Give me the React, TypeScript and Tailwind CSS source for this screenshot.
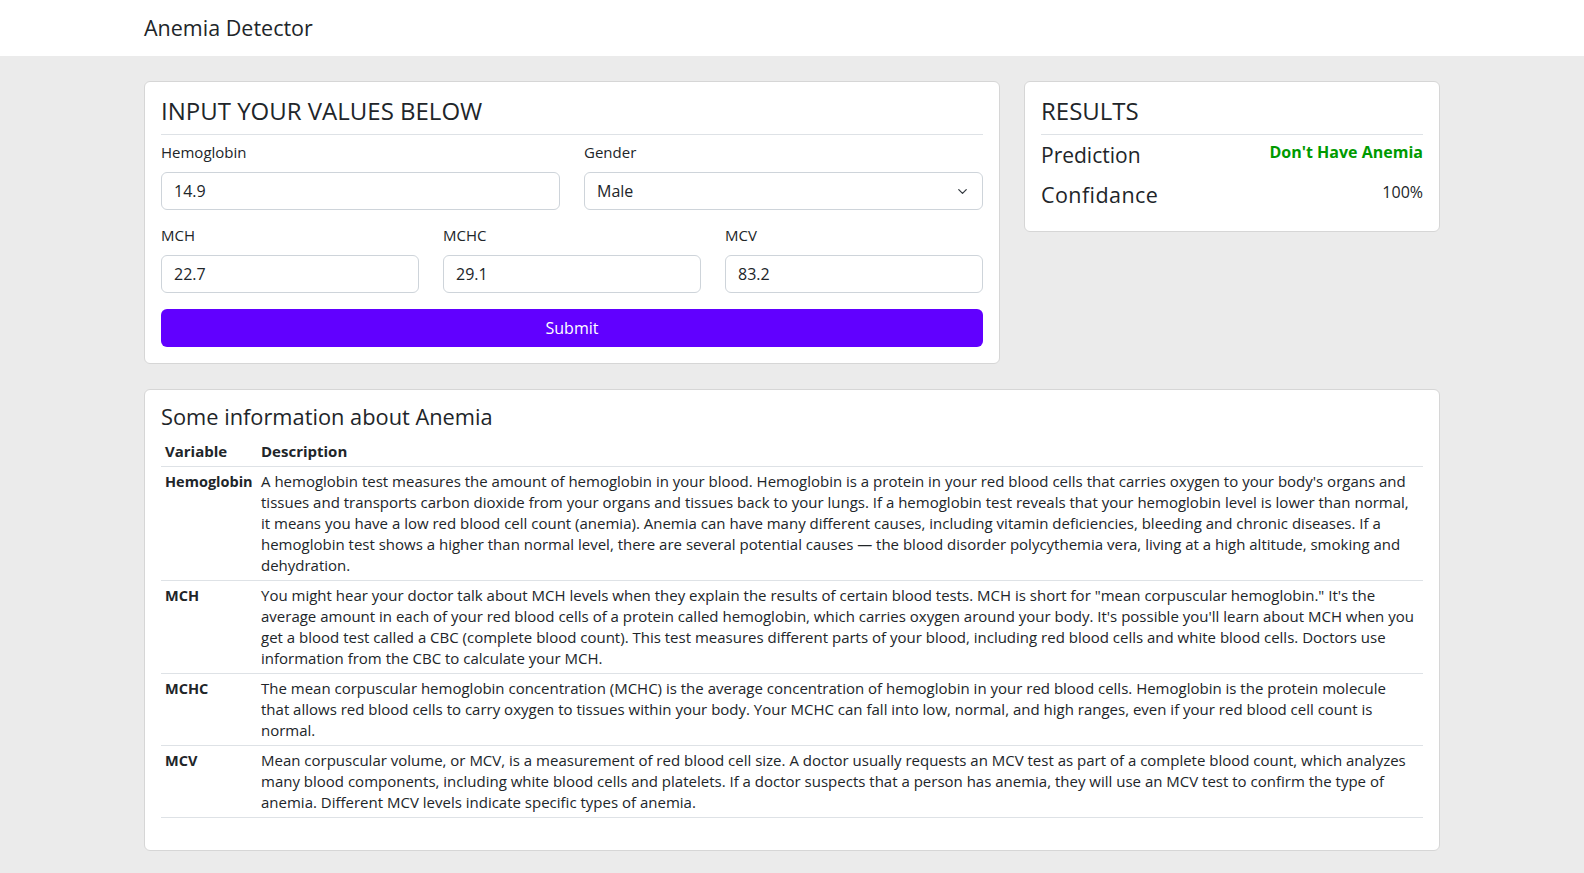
import { ChevronDown } from 'lucide-react';

const FONT = "font-['Open_Sans',sans-serif]";

const rows: { name: string; lines: string[] }[] = [
    {
        name: 'Hemoglobin',
        lines: [
            "A hemoglobin test measures the amount of hemoglobin in your blood. Hemoglobin is a protein in your red blood cells that carries oxygen to your body's organs and",
            'tissues and transports carbon dioxide from your organs and tissues back to your lungs. If a hemoglobin test reveals that your hemoglobin level is lower than normal,',
            'it means you have a low red blood cell count (anemia). Anemia can have many different causes, including vitamin deficiencies, bleeding and chronic diseases. If a',
            'hemoglobin test shows a higher than normal level, there are several potential causes — the blood disorder polycythemia vera, living at a high altitude, smoking and',
            'dehydration.',
        ],
    },
    {
        name: 'MCH',
        lines: [
            'You might hear your doctor talk about MCH levels when they explain the results of certain blood tests. MCH is short for "mean corpuscular hemoglobin." It\'s the',
            "average amount in each of your red blood cells of a protein called hemoglobin, which carries oxygen around your body. It's possible you'll learn about MCH when you",
            'get a blood test called a CBC (complete blood count). This test measures different parts of your blood, including red blood cells and white blood cells. Doctors use',
            'information from the CBC to calculate your MCH.',
        ],
    },
    {
        name: 'MCHC',
        lines: [
            'The mean corpuscular hemoglobin concentration (MCHC) is the average concentration of hemoglobin in your red blood cells. Hemoglobin is the protein molecule',
            'that allows red blood cells to carry oxygen to tissues within your body. Your MCHC can fall into low, normal, and high ranges, even if your red blood cell count is',
            'normal.',
        ],
    },
    {
        name: 'MCV',
        lines: [
            'Mean corpuscular volume, or MCV, is a measurement of red blood cell size. A doctor usually requests an MCV test as part of a complete blood count, which analyzes',
            'many blood components, including white blood cells and platelets. If a doctor suspects that a person has anemia, they will use an MCV test to confirm the type of',
            'anemia. Different MCV levels indicate specific types of anemia.',
        ],
    },
];

// Small labelled text field
function Field({ label, value, className = '' }: { label: string; value: string; className?: string }) {
    return (
        <div className={className}>
            <label className="block text-[15px] leading-[21px] mb-[9px]">{label}</label>
            <div className="h-[38px] border border-[#ced4da] rounded-md bg-white px-3 flex items-center text-[16px]">
                {value}
            </div>
        </div>
    );
}

export default function App() {
    return (
        <div className={`min-h-[873px] bg-[#ebebeb] text-[#212529] ${FONT}`}>
            <header className="bg-white h-[56px] flex items-center">
                <div className="w-[1296px] mx-auto text-[21.5px] leading-none">Anemia Detector</div>
            </header>

            <main className="w-[1296px] mx-auto pt-[25px]">
                <div className="flex gap-6 items-start">
                    {/* inputs */}
                    <section className="w-[856px] bg-white border border-[#d6d6d6] rounded-md p-4">
                        <h2 className="text-[24px] leading-[26px] font-medium">INPUT YOUR VALUES BELOW</h2>
                        <hr className="border-t border-[#dee2e6] mt-[10px] mb-[7px]" />
                        <div className="grid grid-cols-2 gap-6">
                            <Field label="Hemoglobin" value="14.9" />
                            <div>
                                <label className="block text-[15px] leading-[21px] mb-[9px]">Gender</label>
                                <div className="h-[38px] border border-[#ced4da] rounded-md bg-white pl-3 pr-3 flex items-center justify-between text-[16px]">
                                    <span>Male</span>
                                    <ChevronDown size={15} strokeWidth={2} className="text-[#343a40]" />
                                </div>
                            </div>
                        </div>
                        <div className="grid grid-cols-3 gap-6 mt-[15px]">
                            <Field label="MCH" value="22.7" />
                            <Field label="MCHC" value="29.1" />
                            <Field label="MCV" value="83.2" />
                        </div>
                        <button className="mt-4 w-full h-[38px] rounded-md bg-[#6100ff] text-white text-[16px]">Submit</button>
                    </section>

                    {/* results */}
                    <section className="w-[416px] bg-white border border-[#d6d6d6] rounded-md px-4 pt-4 pb-[24px]">
                        <h2 className="text-[24px] leading-[26px] font-medium">RESULTS</h2>
                        <hr className="border-t border-[#dee2e6] mt-[10px] mb-[8px]" />
                        <div className="flex justify-between items-start">
                            <span className="text-[21px] leading-[24px] font-medium">Prediction</span>
                            <span className="text-[16px] leading-[18px] font-bold text-[#009a00]">Don't Have Anemia</span>
                        </div>
                        <div className="flex justify-between items-start mt-[16px]">
                            <span className="text-[21.5px] leading-[24px] font-medium tracking-[0.02em]">Confidance</span>
                            <span className="text-[16px] leading-[18px]">100%</span>
                        </div>
                    </section>
                </div>

                {/* info */}
                <section className="mt-[25px] bg-white border border-[#d6d6d6] rounded-md p-4">
                    <h3 className="text-[21.8px] leading-[22px] font-medium mb-[9px]">Some information about Anemia</h3>
                    <table className="w-full text-[15px] leading-[21px] mb-4 border-collapse">
                        <thead>
                            <tr className="border-b border-[#dee2e6]">
                                <th className="text-left font-bold p-1 w-[96px]">Variable</th>
                                <th className="text-left font-bold p-1">Description</th>
                            </tr>
                        </thead>
                        <tbody>
                            {rows.map((r) => (
                                <tr key={r.name} className="border-b border-[#dee2e6] align-top">
                                    <td className="font-bold p-1 text-[14.5px]">{r.name}</td>
                                    <td className="p-1">
                                        {r.lines.map((l, i) => (
                                            <span key={i} className="block whitespace-nowrap">{l}</span>
                                        ))}
                                    </td>
                                </tr>
                            ))}
                        </tbody>
                    </table>
                </section>
            </main>
        </div>
    );
}
